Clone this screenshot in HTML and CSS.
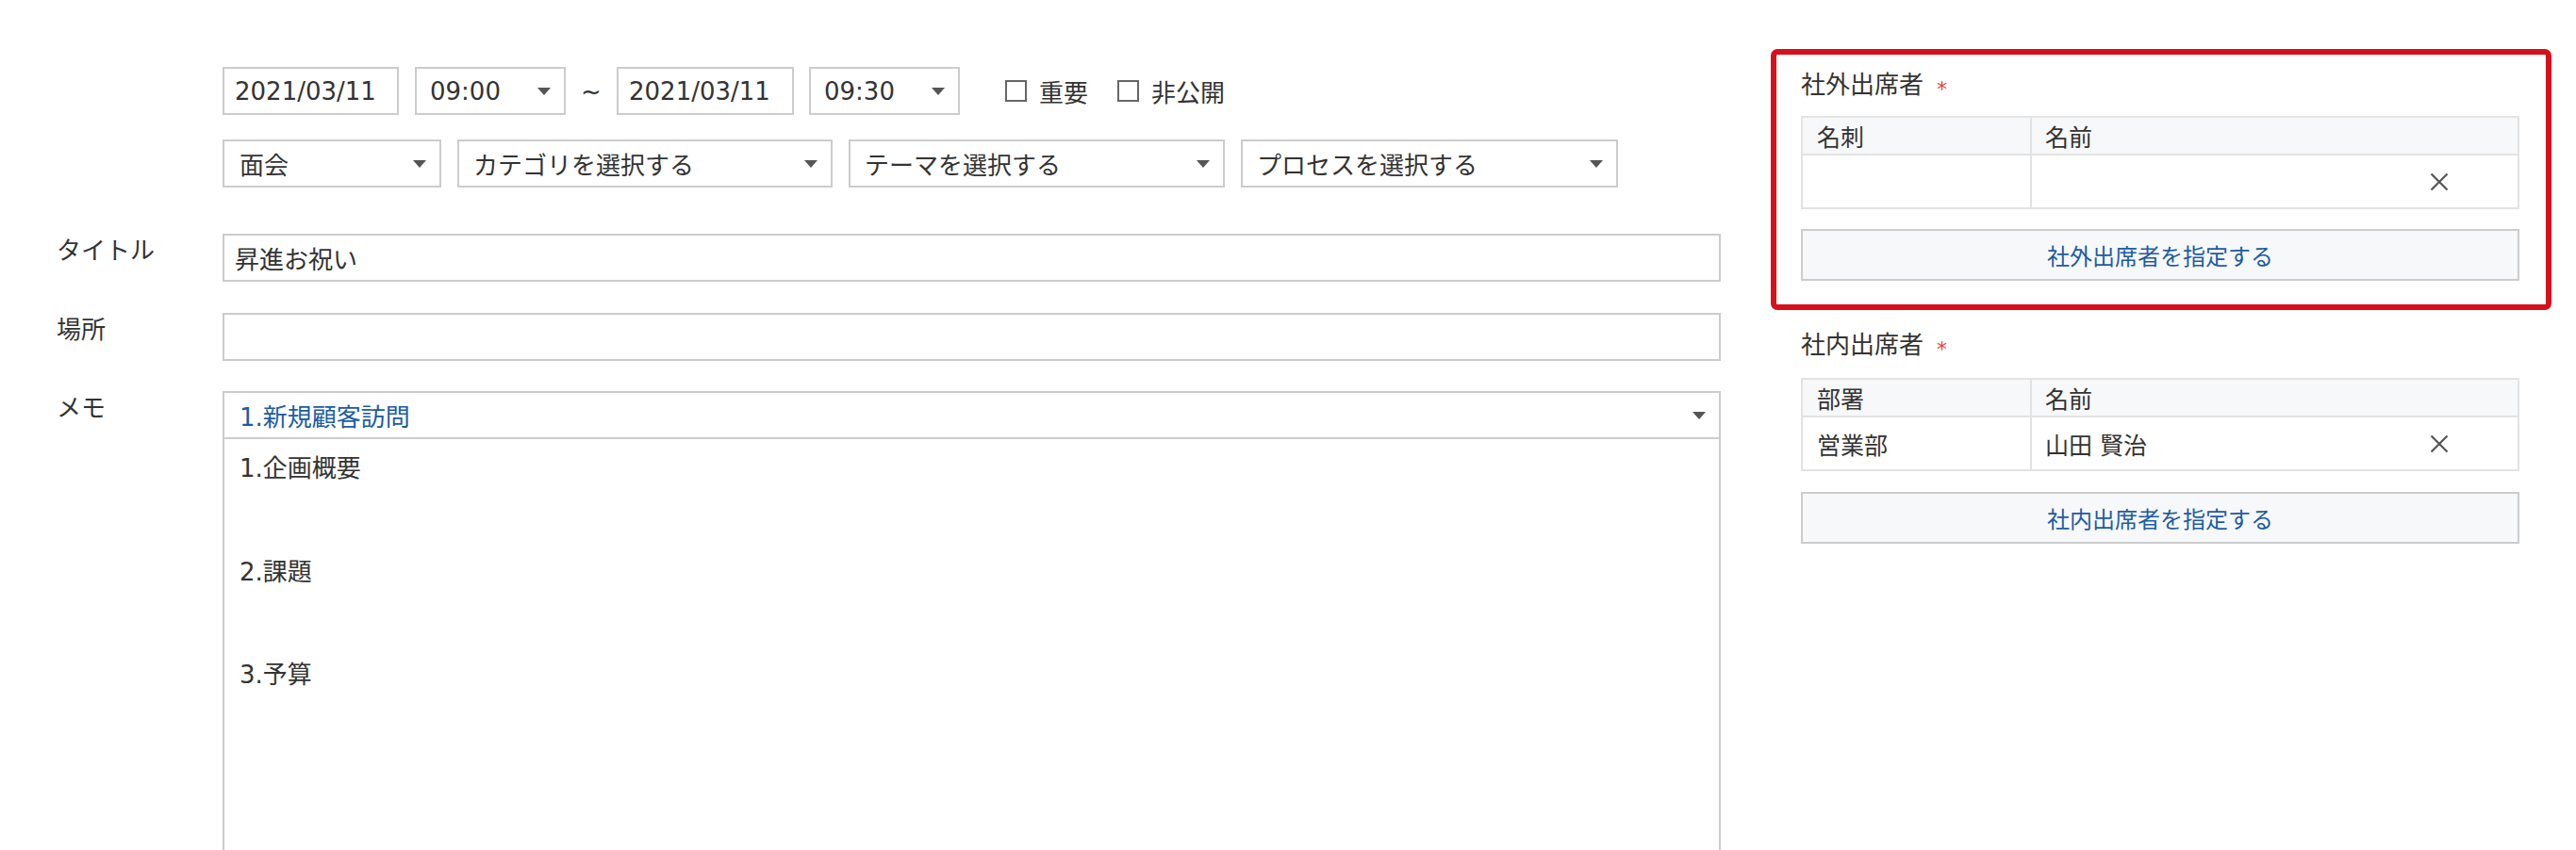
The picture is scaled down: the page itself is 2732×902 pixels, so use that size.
FILE: index.html
```html
<!DOCTYPE html>
<html lang="ja">
<head>
<meta charset="utf-8">
<title>予定の登録</title>
<link rel="stylesheet" href="styles.css">
</head>
<body>
<div class="page">
  <main class="form">
    <div class="row r-datetime">
      <div class="label"></div>
      <div class="field inline">
        <div class="box text date">2021/03/11</div>
        <div class="box sel time t1"><span>09:00</span><i class="arrow"></i></div>
        <span class="tilde">~</span>
        <div class="box text date d2">2021/03/11</div>
        <div class="box sel time t2"><span>09:30</span><i class="arrow"></i></div>
        <label class="check c-first"><span class="cb"></span>重要</label>
        <label class="check c-second"><span class="cb"></span>非公開</label>
      </div>
    </div>

    <div class="row r-cats">
      <div class="label"></div>
      <div class="field inline">
        <div class="box sel s-type"><span>面会</span><i class="arrow"></i></div>
        <div class="box sel s-cat"><span>カテゴリを選択する</span><i class="arrow"></i></div>
        <div class="box sel s-theme"><span>テーマを選択する</span><i class="arrow"></i></div>
        <div class="box sel s-proc"><span>プロセスを選択する</span><i class="arrow"></i></div>
      </div>
    </div>

    <div class="row r-title">
      <div class="label">タイトル</div>
      <div class="field"><div class="box text">昇進お祝い</div></div>
    </div>

    <div class="row r-place">
      <div class="label">場所</div>
      <div class="field"><div class="box text"></div></div>
    </div>

    <div class="row r-memo">
      <div class="label">メモ</div>
      <div class="field">
        <div class="box sel memo-sel"><span class="link">1.新規顧客訪問</span><i class="arrow"></i></div>
        <div class="memo-body">1.企画概要<br><br><br>2.課題<br><br><br>3.予算</div>
      </div>
    </div>
  </main>

  <aside class="side">
    <section class="attend highlight">
      <h3 class="att-title">社外出席者<span class="req">*</span></h3>
      <table class="att-table">
        <thead>
          <tr><th class="c1"><div class="cell head">名刺</div></th><th class="c2"><div class="cell head">名前</div></th></tr>
        </thead>
        <tbody>
          <tr>
            <td class="c1"><div class="cell body"></div></td>
            <td class="c2"><div class="cell body name-cell"><span></span>
              <svg class="x" width="20" height="20" viewBox="0 0 20 20"><path d="M1.5 1.5 L18.5 18.5 M18.5 1.5 L1.5 18.5" stroke="#555" stroke-width="2.2" fill="none"/></svg>
            </div></td>
          </tr>
        </tbody>
      </table>
      <button class="pick" type="button">社外出席者を指定する</button>
    </section>

    <section class="attend second">
      <h3 class="att-title">社内出席者<span class="req">*</span></h3>
      <table class="att-table">
        <thead>
          <tr><th class="c1"><div class="cell head">部署</div></th><th class="c2"><div class="cell head">名前</div></th></tr>
        </thead>
        <tbody>
          <tr>
            <td class="c1"><div class="cell body">営業部</div></td>
            <td class="c2"><div class="cell body name-cell"><span>山田 賢治</span>
              <svg class="x" width="20" height="20" viewBox="0 0 20 20"><path d="M1.5 1.5 L18.5 18.5 M18.5 1.5 L1.5 18.5" stroke="#555" stroke-width="2.2" fill="none"/></svg>
            </div></td>
          </tr>
        </tbody>
      </table>
      <button class="pick" type="button">社内出席者を指定する</button>
    </section>
  </aside>
</div>
</body>
</html>
```

FILE: styles.css
```css
html, body {
  margin: 0;
  padding: 0;
  overflow: hidden;
  background: #ffffff;
}

body {
  font-family: "DejaVu Sans", "Noto Sans CJK JP", sans-serif;
  color: #333333;
}

.page {
  display: flex;
  align-items: flex-start;
}

/* ---------- left form ---------- */
.form {
  flex: none;
  width: 1825px;
  padding-top: 71px;
}

.row {
  display: flex;
  align-items: flex-start;
}

.r-cats { margin-top: 26px; }
.r-title { margin-top: 49px; }
.r-place { margin-top: 33px; }
.r-memo { margin-top: 32px; }

.label {
  flex: none;
  width: 176px;
  padding-left: 60px;
  padding-top: 3px;
  font-size: 26px;
  line-height: 30px;
  color: #333333;
}

.field {
  flex: 1;
  min-width: 0;
}

.inline {
  display: flex;
  align-items: center;
}

.box {
  box-sizing: border-box;
  height: 51px;
  border: 2px solid #cccccc;
  background: #ffffff;
  display: flex;
  align-items: center;
  font-size: 26px;
  white-space: nowrap;
}

.text {
  padding-left: 11px;
}

.sel {
  justify-content: space-between;
  padding: 0 14px 0 15px;
}

.arrow {
  display: block;
  width: 0;
  height: 0;
  border-left: 7.5px solid transparent;
  border-right: 7.5px solid transparent;
  border-top: 8px solid #555555;
}

.date { width: 187px; }
.d2 { width: 188px; }

.time {
  width: 160px;
  padding-left: 14px;
}
.t1 { margin-left: 17px; }
.t2 { margin-left: 16px; }

.tilde {
  width: 54px;
  text-align: center;
  font-size: 26px;
}

.check {
  display: flex;
  align-items: center;
  font-size: 26px;
}
.c-first { margin-left: 48px; }
.c-second { margin-left: 31px; }

.cb {
  box-sizing: border-box;
  width: 23px;
  height: 23px;
  border: 2px solid #666666;
  background: #ffffff;
  margin-right: 13px;
}

.s-type { width: 232px; padding-left: 16px; }
.s-cat { width: 398px; margin-left: 17px; }
.s-theme { width: 399px; margin-left: 17px; }
.s-proc { width: 400px; margin-left: 17px; }

.memo-sel {
  padding-left: 16px;
}

.link {
  color: #1d5ca4;
}

.memo-body {
  box-sizing: border-box;
  height: 470px;
  border: 2px solid #cccccc;
  border-top: none;
  padding: 13px 16px;
  font-size: 26px;
  line-height: 36.5px;
}

/* ---------- right side ---------- */
.side {
  flex: none;
  width: 828px;
  margin-left: 53px;
  padding-top: 52px;
}

.highlight {
  border: 6px solid #d7101c;
  border-radius: 7px;
  padding: 14px 28px 25px 26px;
}

.second {
  margin-top: 19px;
  padding-left: 32px;
  width: 762px;
}

.att-title {
  margin: 0;
  height: 36px;
  font-size: 26px;
  line-height: 36px;
  font-weight: normal;
  color: #333333;
}

.req {
  color: #e8413b;
  font-size: 22px;
  line-height: 1;
  margin-left: 14px;
  vertical-align: -3px;
}

.att-table {
  table-layout: fixed;
  width: 762px;
  margin-top: 15px;
  border-spacing: 0;
  border-top: 2px solid #e3e3e3;
  border-left: 2px solid #e3e3e3;
  font-size: 25px;
}

.second .att-table {
  margin-top: 17px;
}

.att-table th,
.att-table td {
  padding: 0;
  border-right: 2px solid #e3e3e3;
  border-bottom: 2px solid #e3e3e3;
  font-weight: normal;
  text-align: left;
  vertical-align: middle;
}

.att-table th.c1 {
  width: 241px;
}

.att-table th {
  background: #f7f8fa;
}

.cell {
  box-sizing: border-box;
  display: flex;
  align-items: center;
  padding-left: 15px;
  white-space: nowrap;
}

.c2 .cell {
  padding-left: 14px;
}

.cell.head { height: 38px; }
.cell.body { height: 55px; }

.c2 .name-cell {
  justify-content: space-between;
  padding-right: 73px;
}

.x {
  display: block;
  flex: none;
}

.pick {
  display: block;
  box-sizing: border-box;
  width: 762px;
  height: 55px;
  margin-top: 21px;
  border: 2px solid #cccccc;
  background: #f7f8fa;
  color: #1d5ca4;
  font-family: "DejaVu Sans", "Noto Sans CJK JP", sans-serif;
  font-size: 24px;
  padding: 0;
  cursor: pointer;
}

.second .pick {
  margin-top: 22px;
}
```
